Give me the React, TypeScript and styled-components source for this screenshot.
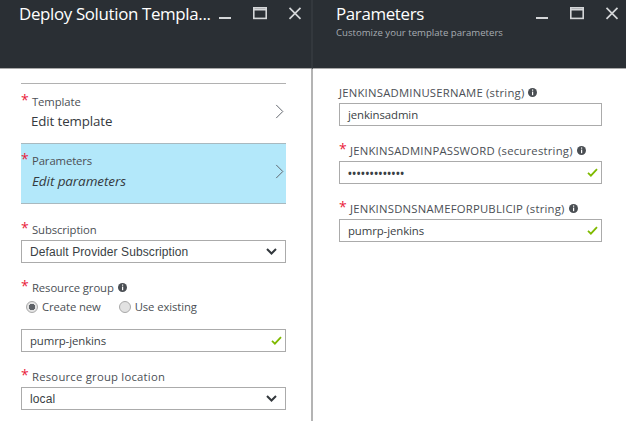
import styled, { createGlobalStyle } from 'styled-components';

const GlobalStyle = createGlobalStyle`
    html, body {
        margin: 0;
        background: #ffffff;
    }
    body {
        font-family: "Open Sans", "Noto Sans", "Liberation Sans", sans-serif;
        color: #3a3f45;
    }
`;

const Blades = styled.div`
    display: flex;
    width: 626px;
    height: 421px;
    overflow: hidden;
`;

const Blade = styled.section<{ $width: number }>`
    width: ${({ $width }) => $width}px;
    flex: none;
    display: flex;
    flex-direction: column;
`;

const Header = styled.header<{ $pad: number; $end: number; $edge?: boolean }>`
    height: 69px;
    flex: none;
    box-sizing: border-box;
    background: #2a2f34;
    border-bottom: 1px solid #a9a9a9;
    border-right: ${({ $edge }) => ($edge ? '2px solid #33383d' : 'none')};
    padding: 2px ${({ $end }) => $end}px 0 ${({ $pad }) => $pad}px;
    display: flex;
    justify-content: space-between;
    align-items: flex-start;
`;

const HeaderText = styled.div`
    min-width: 0;
`;

const Title = styled.h1`
    margin: 0;
    font-size: 16.9px;
    font-weight: 400;
    line-height: 24px;
    letter-spacing: -0.35px;
    color: #ffffff;
    white-space: nowrap;
`;

const Subtitle = styled.p`
    margin: 1px 0 0;
    font-size: 9.6px;
    line-height: 12px;
    color: #a7acb1;
    white-space: nowrap;
`;

const WindowButtons = styled.div`
    display: flex;
    align-items: center;
    gap: 21px;
    padding-top: 5px;
    color: #d4d6d8;
`;

const WindowIcon = styled.svg`
    display: block;
    width: 14px;
    height: 14px;
    fill: none;
    stroke: currentColor;
`;

const LeftBody = styled.div`
    flex: 1;
    padding: 14px 25px 0 21px;
    border-right: 2px solid #b4b4b4;
`;

const Rule = styled.hr`
    margin: 0;
    border: 0;
    border-top: 1px solid #b1b1b1;
`;

const NavItem = styled.div<{ $active?: boolean }>`
    height: ${({ $active }) => ($active ? '61px' : '59px')};
    box-sizing: border-box;
    position: relative;
    padding-top: ${({ $active }) => ($active ? '8px' : '9px')};
    background: ${({ $active }) => ($active ? '#b3e8fa' : 'transparent')};
    border-top: ${({ $active }) => ($active ? '1px solid #a9b9bf' : 'none')};
    border-bottom: ${({ $active }) => ($active ? '1px solid #a9b9bf' : 'none')};
`;

const LabelRow = styled.div<{ $top?: number; $spread?: boolean }>`
    display: flex;
    align-items: center;
    height: 16px;
    margin-top: ${({ $top }) => $top ?? 0}px;
    font-size: 11.3px;
    letter-spacing: ${({ $spread }) => ($spread ? '0.22px' : '-0.1px')};
    color: #4b4f55;
    white-space: nowrap;
`;

const Star = styled.span`
    width: 11px;
    flex: none;
    align-self: flex-start;
    color: #ea1c3c;
    font-size: 14px;
    line-height: 14px;
`;

const NavValue = styled.div<{ $italic?: boolean }>`
    margin: ${({ $italic }) => ($italic ? '4px' : '3px')} 0 0 ${({ $italic }) => ($italic ? '11px' : '10px')};
    font-size: ${({ $italic }) => ($italic ? '13.5px' : '13.3px')};
    line-height: 18px;
    letter-spacing: -0.1px;
    font-style: ${({ $italic }) => ($italic ? 'italic' : 'normal')};
    color: #353a40;
`;

const Chevron = styled.svg`
    position: absolute;
    right: 2px;
    top: 20px;
    width: 9px;
    height: 15px;
    fill: none;
    stroke: #5a5f65;
    stroke-width: 1;
`;

const Field = styled.div<{ $arial?: boolean; $top?: number }>`
    height: 23px;
    box-sizing: border-box;
    margin-top: ${({ $top }) => $top ?? 3}px;
    padding: 0 8px;
    display: flex;
    align-items: center;
    justify-content: space-between;
    border: 1px solid #ababab;
    background: #ffffff;
    font-family: ${({ $arial }) => ($arial ? '"Liberation Sans", Arial, sans-serif' : 'inherit')};
    font-size: ${({ $arial }) => ($arial ? '12px' : '11.4px')};
    letter-spacing: ${({ $arial }) => ($arial ? '0.1px' : '-0.1px')};
    color: #3a3f45;
    white-space: nowrap;
`;

const Dots = styled.span`
    font-size: 10px;
    letter-spacing: 0.6px;
    font-weight: 700;
`;

const Radios = styled.div`
    display: flex;
    align-items: center;
    gap: 18px;
    height: 17px;
    margin: 3px 0 0 5px;
    font-size: 11.3px;
    letter-spacing: -0.1px;
    color: #4b4f55;
`;

const RadioOption = styled.label`
    display: flex;
    align-items: center;
    gap: 4px;
`;

const RadioMark = styled.span<{ $checked?: boolean }>`
    width: 12px;
    height: 12px;
    box-sizing: border-box;
    border-radius: 50%;
    border: 1px solid #a9a9a9;
    background: ${({ $checked }) =>
        $checked ? 'radial-gradient(circle, #5f6368 0 3px, #e4e4e4 3.5px)' : '#e2e2e2'};
`;

const RightBody = styled.div`
    flex: 1;
    padding: 15px 24px 0 26px;
`;

const ParamBlock = styled.div<{ $top: number }>`
    margin-top: ${({ $top }) => $top}px;
`;

const CheckIcon = styled.svg`
    flex: none;
    margin-right: -5px;
    fill: none;
    stroke: #7fba00;
    stroke-width: 2;
`;

const CaretIcon = styled.svg`
    flex: none;
    fill: none;
    stroke: #33383d;
    stroke-width: 2;
`;

const InfoIcon = styled.svg`
    flex: none;
    margin-left: 4px;
`;

const Check = () => (
    <CheckIcon width="11" height="9" viewBox="0 0 12 10">
        <path d="M1 5.5 L4.2 8.5 L11 1.2" />
    </CheckIcon>
);

const Caret = () => (
    <CaretIcon width="11" height="7" viewBox="0 0 11 7">
        <path d="M1 1 L5.5 5.5 L10 1" />
    </CaretIcon>
);

const Info = () => (
    <InfoIcon width="9" height="9" viewBox="0 0 9 9">
        <circle cx="4.5" cy="4.5" r="4.5" fill="#4a4e53" />
        <rect x="4" y="1.5" width="1.2" height="1.2" fill="#fff" />
        <rect x="4" y="3.6" width="1.2" height="3.6" fill="#fff" />
    </InfoIcon>
);

const WindowControls = () => (
    <WindowButtons>
        <WindowIcon viewBox="0 0 14 14">
            <path d="M1 11 H13" strokeWidth="2" />
        </WindowIcon>
        <WindowIcon viewBox="0 0 14 14">
            <rect x="0.8" y="0.8" width="12.4" height="10.6" strokeWidth="1.6" />
            <path d="M1 2.5 H13" strokeWidth="2" />
        </WindowIcon>
        <WindowIcon viewBox="0 0 14 14">
            <path d="M1.5 0.8 L12.5 11.8 M12.5 0.8 L1.5 11.8" strokeWidth="1.7" />
        </WindowIcon>
    </WindowButtons>
);

const NavArrow = () => (
    <Chevron viewBox="0 0 9 16">
        <path d="M1 1 L8 8 L1 15" />
    </Chevron>
);

const App = () => {
    return (
        <Blades>
            <GlobalStyle />
            <Blade $width={313}>
                <Header $pad={19} $end={9} $edge>
                    <HeaderText>
                        <Title>Deploy Solution Templa...</Title>
                    </HeaderText>
                    <WindowControls />
                </Header>
                <LeftBody>
                    <Rule />
                    <NavItem>
                        <LabelRow>
                            <Star>*</Star>Template
                        </LabelRow>
                        <NavValue>Edit template</NavValue>
                        <NavArrow />
                    </NavItem>
                    <NavItem $active>
                        <LabelRow>
                            <Star>*</Star>Parameters
                        </LabelRow>
                        <NavValue $italic>Edit parameters</NavValue>
                        <NavArrow />
                    </NavItem>
                    <LabelRow $top={17}>
                        <Star>*</Star>Subscription
                    </LabelRow>
                    <Field $arial>
                        Default Provider Subscription
                        <Caret />
                    </Field>
                    <LabelRow $top={16}>
                        <Star>*</Star>Resource group
                        <Info />
                    </LabelRow>
                    <Radios>
                        <RadioOption>
                            <RadioMark $checked />
                            Create new
                        </RadioOption>
                        <RadioOption>
                            <RadioMark />
                            Use existing
                        </RadioOption>
                    </Radios>
                    <Field $top={14}>
                        pumrp-jenkins
                        <Check />
                    </Field>
                    <LabelRow $top={16} $spread>
                        <Star>*</Star>Resource group location
                    </LabelRow>
                    <Field $arial>
                        local
                        <Caret />
                    </Field>
                </LeftBody>
            </Blade>
            <Blade $width={313}>
                <Header $pad={23} $end={7}>
                    <HeaderText>
                        <Title>Parameters</Title>
                        <Subtitle>Customize your template parameters</Subtitle>
                    </HeaderText>
                    <WindowControls />
                </Header>
                <RightBody>
                    <ParamBlock $top={0}>
                        <LabelRow $spread>
                            JENKINSADMINUSERNAME (string)
                            <Info />
                        </LabelRow>
                        <Field>jenkinsadmin</Field>
                    </ParamBlock>
                    <ParamBlock $top={16}>
                        <LabelRow $spread>
                            <Star>*</Star>JENKINSADMINPASSWORD (securestring)
                            <Info />
                        </LabelRow>
                        <Field>
                            <Dots>•••••••••••••</Dots>
                            <Check />
                        </Field>
                    </ParamBlock>
                    <ParamBlock $top={16}>
                        <LabelRow $spread>
                            <Star>*</Star>JENKINSDNSNAMEFORPUBLICIP (string)
                            <Info />
                        </LabelRow>
                        <Field>
                            pumrp-jenkins
                            <Check />
                        </Field>
                    </ParamBlock>
                </RightBody>
            </Blade>
        </Blades>
    );
};

export default App;
